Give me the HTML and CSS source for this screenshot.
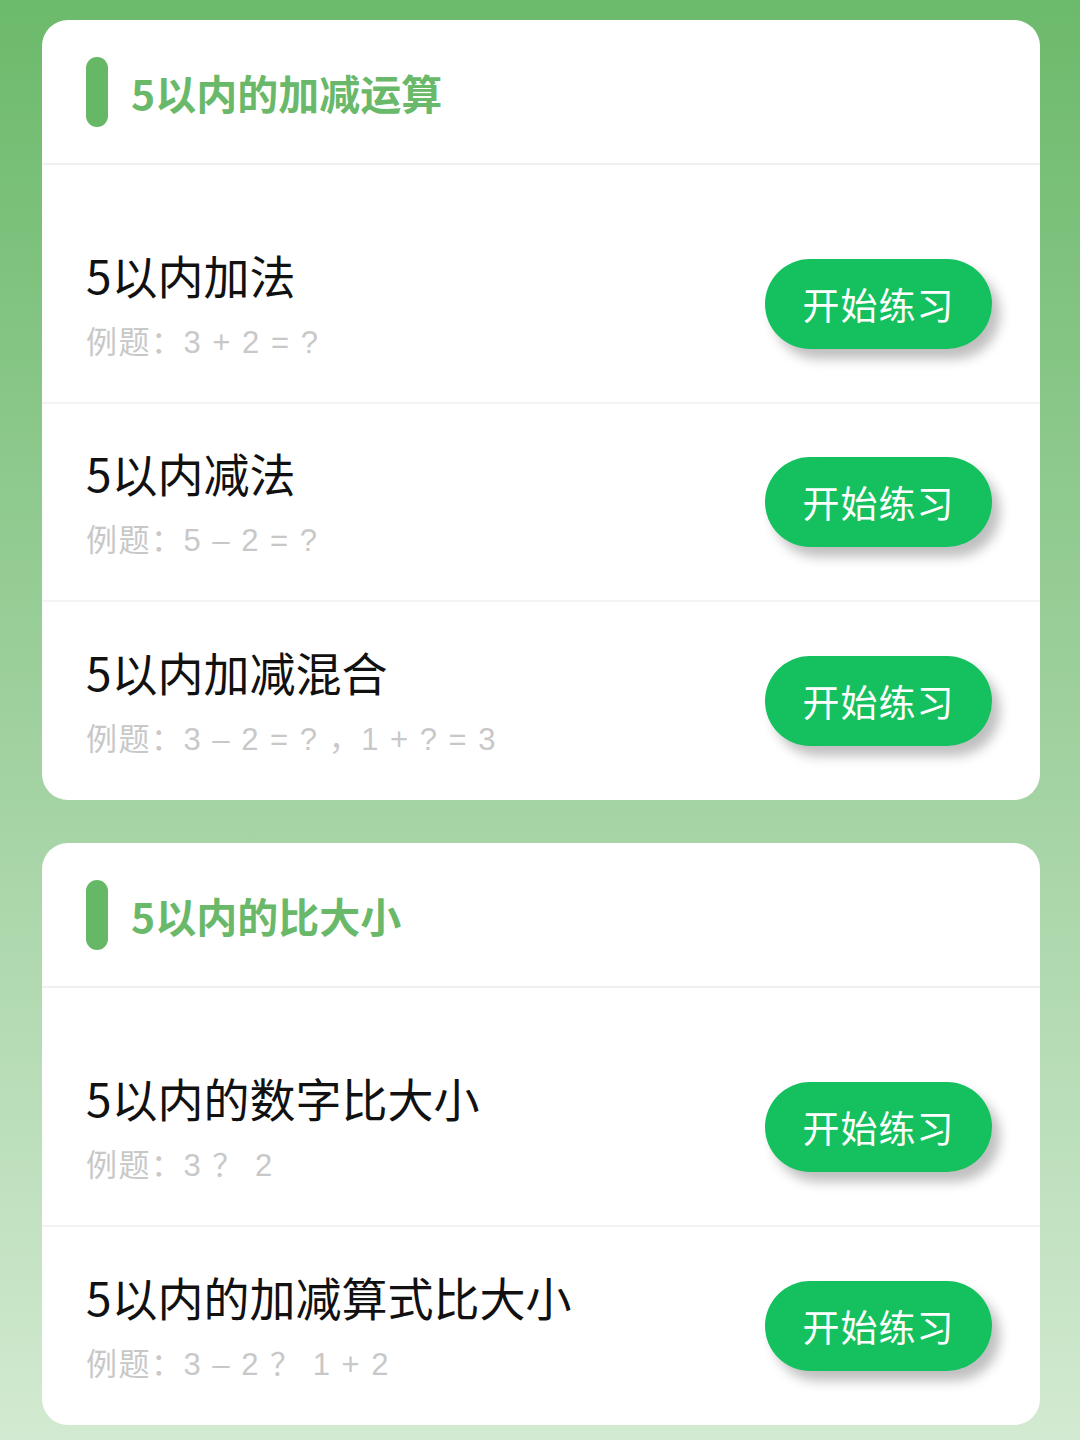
FILE: index.html
```html
<!DOCTYPE html>
<html lang="zh-CN">
<head>
  <meta charset="UTF-8">
  <title>5以内练习</title>
  <link rel="stylesheet" href="styles.css">
</head>
<body>
  <div class="card">
    <div class="card-header">
      <span class="bar"></span>
      <h2>5以内的加减运算</h2>
    </div>
    <div class="list">
      <div class="row">
        <div class="info">
          <h3>5以内加法</h3>
          <p>例题：3 + 2 = ?</p>
        </div>
        <button class="btn-start">开始练习</button>
      </div>
      <div class="row">
        <div class="info">
          <h3>5以内减法</h3>
          <p>例题：5 – 2 = ?</p>
        </div>
        <button class="btn-start">开始练习</button>
      </div>
      <div class="row">
        <div class="info">
          <h3>5以内加减混合</h3>
          <p>例题：3 – 2 = ? ，1 + ? = 3</p>
        </div>
        <button class="btn-start">开始练习</button>
      </div>
    </div>
  </div>

  <div class="card">
    <div class="card-header">
      <span class="bar"></span>
      <h2>5以内的比大小</h2>
    </div>
    <div class="list">
      <div class="row">
        <div class="info">
          <h3>5以内的数字比大小</h3>
          <p>例题：3 ？ 2</p>
        </div>
        <button class="btn-start">开始练习</button>
      </div>
      <div class="row">
        <div class="info">
          <h3>5以内的加减算式比大小</h3>
          <p>例题：3 – 2 ？ 1 + 2</p>
        </div>
        <button class="btn-start">开始练习</button>
      </div>
    </div>
  </div>
</body>
</html>
```

FILE: styles.css
```css
body {
  font-family: "Noto Sans CJK SC", "Noto Sans", sans-serif;
  background: linear-gradient(180deg, #6cba6b 0%, #a6d4a5 56%, #d4ebd3 100%);
  min-height: 1440px;
  box-sizing: border-box;
  margin: 0;
  padding: 20px 40px 0 42px;
}

.card {
  background: #ffffff;
  border-radius: 26px;
  margin-bottom: 43px;
  overflow: hidden;
}

.card-header {
  display: flex;
  align-items: center;
  gap: 23px;
  height: 143px;
  padding-left: 44px;
  border-bottom: 2px solid #f0f0f0;
}

.bar {
  width: 22px;
  height: 70px;
  border-radius: 11px;
  background-color: #66b866;
}

.card-header h2 {
  margin: 0;
  font-size: 41px;
  font-weight: 700;
  color: #6ab96a;
}

.list {
  padding-top: 41px;
}

.row {
  display: flex;
  align-items: center;
  justify-content: space-between;
  height: 196px;
  padding: 0 48px 0 44px;
  border-bottom: 2px solid #f3f3f3;
}

.row:last-child {
  border-bottom: none;
  height: 198px;
}

.info h3 {
  margin: 0;
  font-size: 46px;
  font-weight: 400;
  line-height: 58px;
  color: #111;
}

.info p {
  margin: 20px 0 0;
  font-family: "Liberation Sans", "Noto Sans CJK SC", sans-serif;
  font-size: 31px;
  line-height: 40px;
  letter-spacing: 1.5px;
  color: #c8c8c8;
}

.btn-start {
  width: 227px;
  height: 90px;
  border: none;
  border-radius: 45px;
  background-color: #14c15e;
  color: #fff;
  font-family: inherit;
  font-size: 37px;
  letter-spacing: 1px;
  box-shadow: 8px 10px 12px rgba(0, 0, 0, 0.25);
  cursor: pointer;
}
```
